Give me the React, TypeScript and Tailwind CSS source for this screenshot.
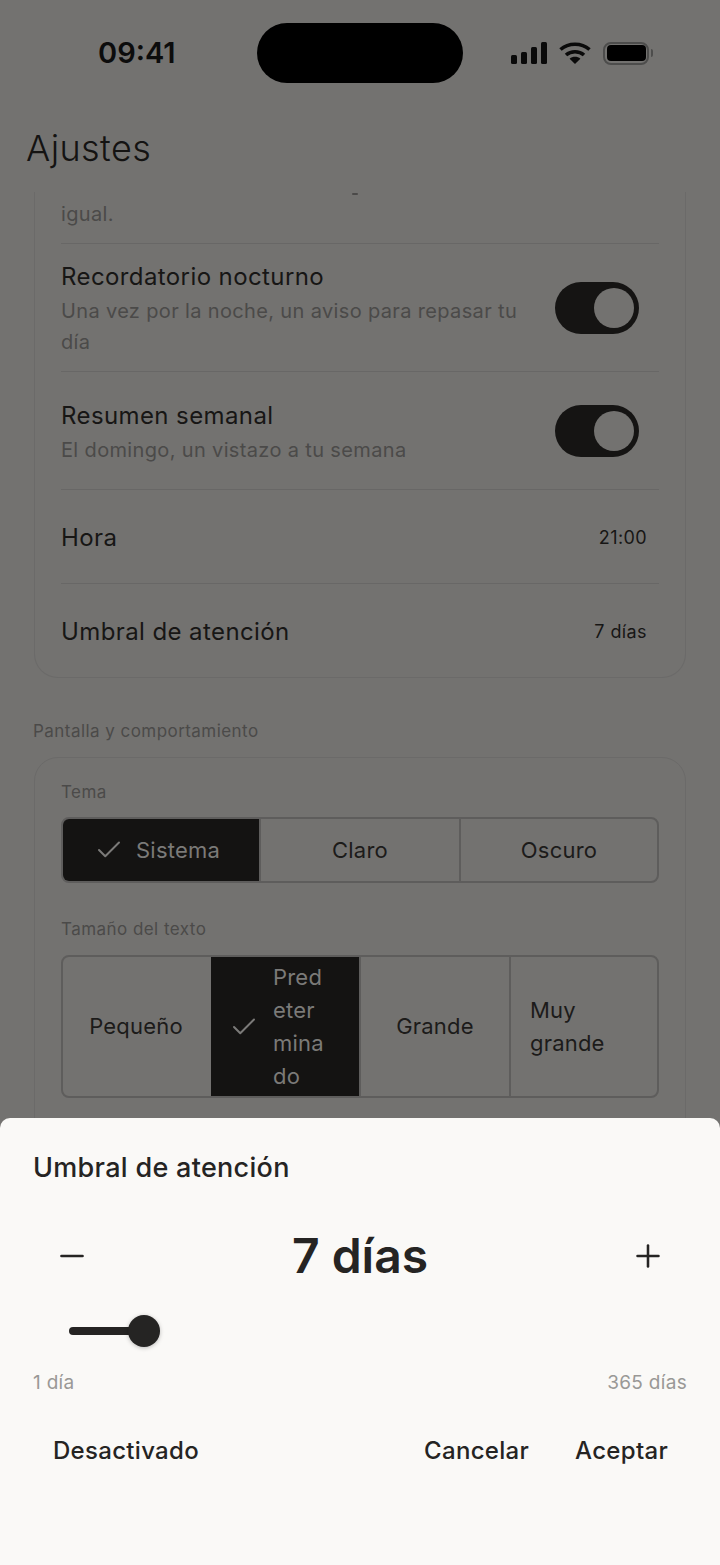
import { Check, Minus, Plus } from "lucide-react";

function Toggle() {
  return (
    <div className="mr-[20px] flex h-[52px] w-[84px] shrink-0 items-center justify-end rounded-full bg-[#151413] pr-[5px]">
      <div className="h-[40px] w-[40px] rounded-full bg-[#737270]" />
    </div>
  );
}

function ToggleRow({ title, sub, className }: { title: string; sub: string; className: string }) {
  return (
    <div className={`flex items-center justify-between border-t border-[#686766] ${className}`}>
      <div className="w-[470px]">
        <div className="text-[24px] leading-[39px] tracking-[0.4px] text-[#171615]">{title}</div>
        <div className="text-[20px] leading-[31px] tracking-[0.35px] text-[#4b4a49]">{sub}</div>
      </div>
      <Toggle />
    </div>
  );
}

function ValueRow({ title, value }: { title: string; value: string }) {
  return (
    <div className="flex h-[94px] items-center justify-between border-t border-[#686766] pr-[12px] pt-[2px]">
      <span className="text-[24px] tracking-[0.4px] text-[#171615]">{title}</span>
      <span className="text-[18px] tracking-[0.4px] text-[#171615]">{value}</span>
    </div>
  );
}

export default function App() {
  return (
    <div className="relative h-[1565px] w-[720px] overflow-hidden bg-[#737270] font-['Inter',sans-serif]">
      {/* status bar */}
      <div className="flex h-[106px] items-start pl-[98px] pt-[23px]">
        <span className="w-[77px] text-[29px] font-semibold leading-[60px] text-[#0c0c0c]">09:41</span>
        <div className="ml-[82px] h-[60px] w-[206px] rounded-[30px] bg-black" />
        <div className="ml-[48px] flex h-[60px] items-center">
          <svg width="36" height="22" viewBox="0 0 36 22" fill="#0a0a0a">
            <rect x="0" y="13" width="6" height="9" rx="1.5" />
            <rect x="10" y="10" width="6" height="12" rx="1.5" />
            <rect x="20" y="5" width="6" height="17" rx="1.5" />
            <rect x="30" y="0" width="6" height="22" rx="1.5" />
          </svg>
          <svg className="ml-[12px]" width="32" height="22" viewBox="0 0 32 22" fill="none" stroke="#0a0a0a" strokeWidth="3.6">
            <path d="M1.5 7.5C9.5 0.5 22.5 0.5 30.5 7.5" />
            <path d="M7 13C12 8.6 20 8.6 25 13" />
            <path d="M16 22L10.6 16.8C13.6 14.2 18.4 14.2 21.4 16.8Z" fill="#0a0a0a" stroke="none" />
          </svg>
          <div className="ml-[12px] flex items-center">
            <div className="flex h-[23px] w-[46px] items-center justify-center rounded-[8px] border-2 border-[#4d4d4c]">
              <div className="h-[16px] w-[39px] rounded-[4px] bg-black" />
            </div>
            <div className="ml-[2px] h-[8px] w-[2px] rounded-r-full bg-[#4d4d4c]" />
          </div>
        </div>
      </div>

      <h1 className="h-[86px] pl-[26px] pt-[17px] text-[36px] font-light leading-[50px] tracking-[0.4px] text-[#141312]">Ajustes</h1>

      {/* settings list, scrolled under the header */}
      <div className="h-[926px] overflow-hidden px-[34px]">
        <div className="-mt-[2px] rounded-b-[24px] border border-t-0 border-[#6b6a69] px-[26px]">
          <div className="pb-[13px] pt-[3px] text-[20px] leading-[31px] tracking-[0.35px] text-[#4b4a49]">
            {/* tail of the line scrolled away above */}
            <div className="ml-[291px] h-[2px] w-[6px] rounded-full bg-[#4b4a49]" />
            <div className="mt-[4px]">igual.</div>
          </div>
          <ToggleRow title="Recordatorio nocturno" sub="Una vez por la noche, un aviso para repasar tu día" className="h-[128px]" />
          <ToggleRow title="Resumen semanal" sub="El domingo, un vistazo a tu semana" className="h-[118px]" />
          <ValueRow title="Hora" value="21:00" />
          <ValueRow title="Umbral de atención" value="7 días" />
        </div>

        <div className="-ml-[1px] mt-[41px] text-[17px] leading-[24px] tracking-[0.45px] text-[#4b4a49]">Pantalla y comportamiento</div>

        <div className="mt-[14px] rounded-[24px] border border-[#6b6a69] px-[26px] pb-[60px] pt-[22px]">
          <div className="text-[17px] leading-[24px] tracking-[0.45px] text-[#4b4a49]">Tema</div>
          <div className="mt-[13px] grid h-[66px] grid-cols-[196px_200px_198px] overflow-hidden rounded-[8px] border-2 border-[#5e5d5c] text-[22px] tracking-[0.2px] text-[#1c1b1a]">
            <div className="flex items-center justify-center gap-[12px] bg-[#141312] pr-[8px] text-[#7b7a78]">
              <Check size={30} strokeWidth={1.6} />
              <span>Sistema</span>
            </div>
            <div className="flex items-center justify-center border-l-2 border-[#5e5d5c]">Claro</div>
            <div className="flex items-center justify-center border-l-2 border-[#5e5d5c]">Oscuro</div>
          </div>

          <div className="mt-[34px] text-[17px] leading-[24px] tracking-[0.45px] text-[#4b4a49]">Tamaño del texto</div>
          <div className="mt-[14px] grid h-[143px] grid-cols-[148px_148px_150px_148px] overflow-hidden rounded-[8px] border-2 border-[#5e5d5c] text-[22px] leading-[33px] tracking-[0.2px] text-[#1c1b1a]">
            <div className="flex items-center justify-center pr-[2px]">Pequeño</div>
            <div className="flex items-center gap-[14px] bg-[#141312] pl-[18px] text-[#7b7a78]">
              <Check size={30} strokeWidth={1.6} className="shrink-0" />
              <span className="w-[56px] break-all">Predeterminado</span>
            </div>
            <div className="flex items-center justify-center border-l-2 border-[#5e5d5c]">Grande</div>
            <div className="flex items-center border-l-2 border-[#5e5d5c] pl-[19px]">Muy<br />grande</div>
          </div>
        </div>
      </div>

      {/* threshold bottom sheet */}
      <div className="absolute inset-x-0 bottom-0 h-[447px] rounded-t-[10px] bg-[#faf9f7] px-[33px] text-[#252423]">
        <div className="pt-[32px] text-[27px] font-medium leading-[36px] tracking-[0.3px]">Umbral de atención</div>
        <div className="mt-[35px] flex h-[70px] items-center justify-between px-[24px]">
          <Minus size={36} strokeWidth={1.8} className="-ml-[3px]" />
          <span className="text-[48px] font-semibold leading-[70px]">7 días</span>
          <Plus size={36} strokeWidth={1.7} className="-mr-[3px]" />
        </div>
        <div className="mt-[20px] flex h-[40px] items-center pl-[36px]">
          <div className="h-[8px] w-[75px] rounded-l-full bg-[#252423]" />
          <div className="-ml-[16px] h-[32px] w-[32px] rounded-full bg-[#252423] shadow-[0_1px_4px_rgba(0,0,0,0.25)]" />
        </div>
        <div className="mt-[17px] flex justify-between text-[19px] leading-[30px] tracking-[0.3px] text-[#999896]">
          <span>1 día</span>
          <span>365 días</span>
        </div>
        <div className="mt-[35px] flex items-center text-[24px] font-medium leading-[36px] tracking-[0.3px]">
          <span className="ml-[20px]">Desactivado</span>
          <span className="ml-auto">Cancelar</span>
          <span className="ml-[46px] mr-[19px]">Aceptar</span>
        </div>
      </div>
    </div>
  );
}
